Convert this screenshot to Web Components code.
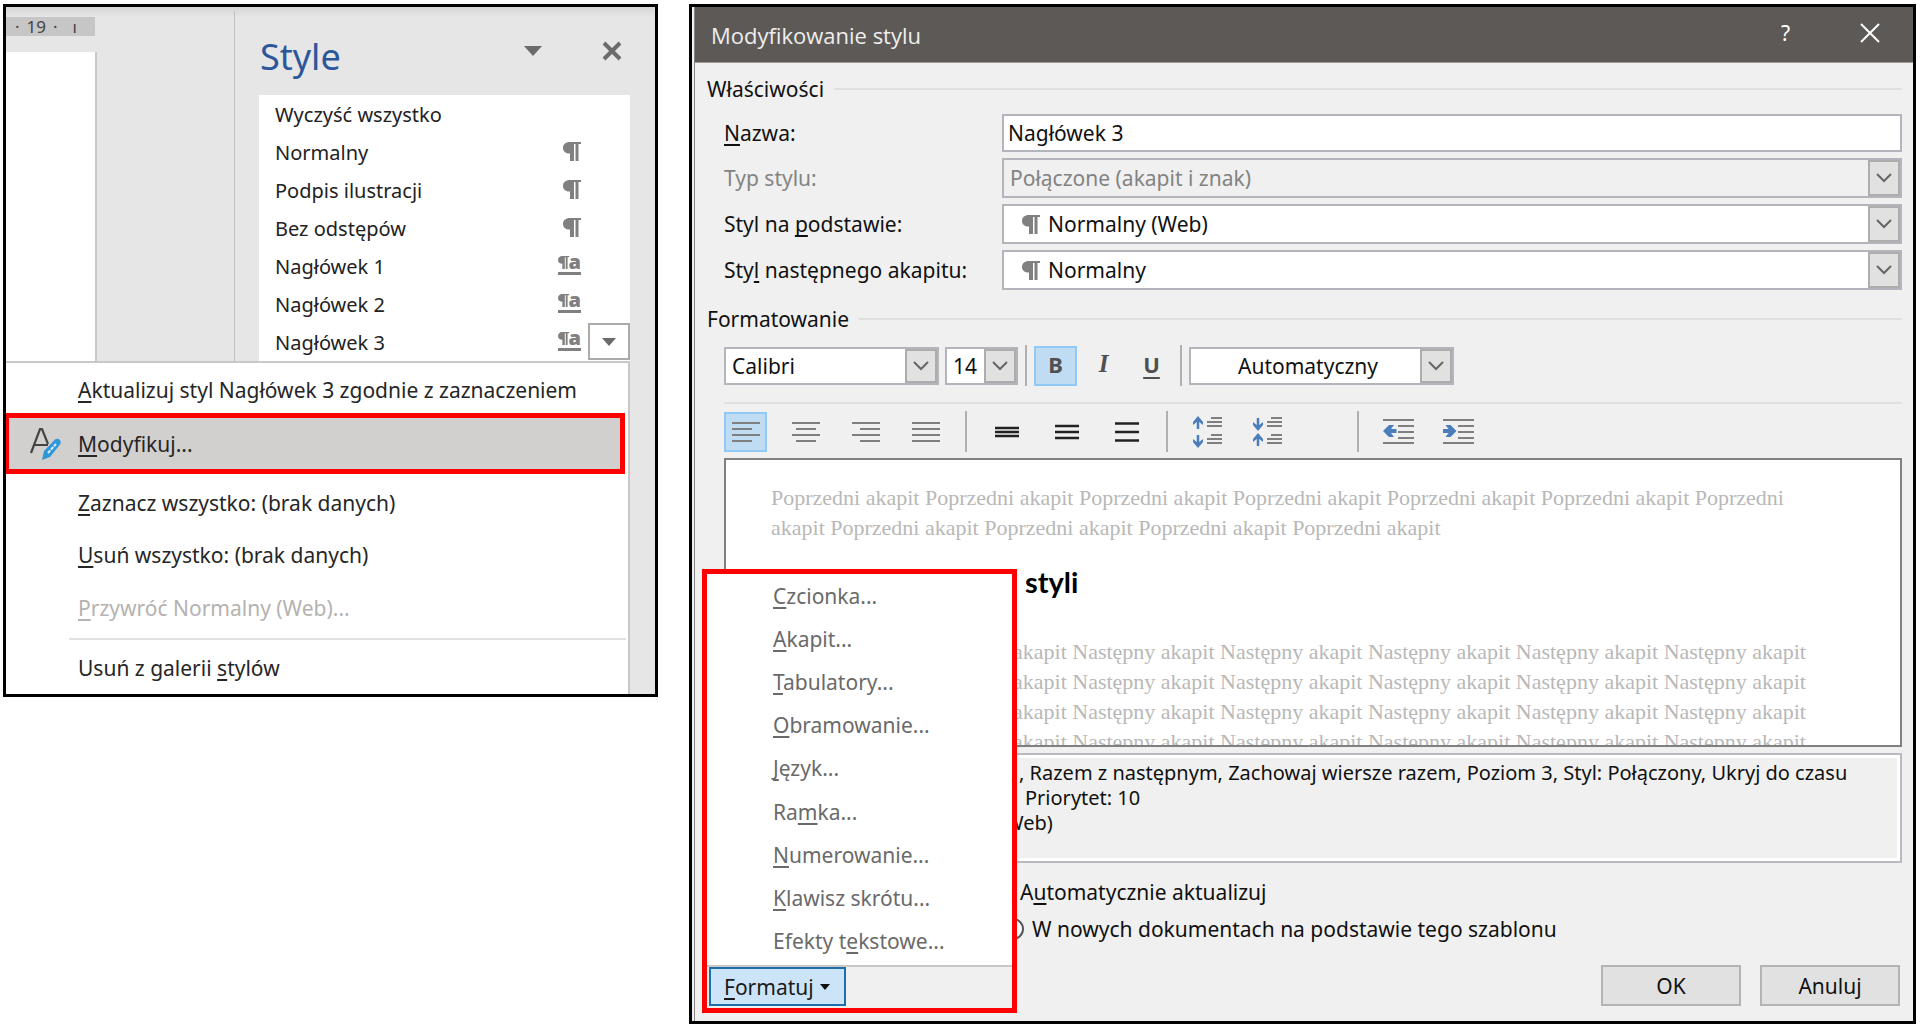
<!DOCTYPE html>
<html lang="pl">
<head>
<meta charset="utf-8">
<title>Modyfikowanie stylu</title>
<style>
body { margin: 0; background: #fff; font-family: "Noto Sans", "Open Sans", sans-serif; font-size: 21px; color: #1a1a1a; }
</style>
</head>
<body>
<app-board>
  <styles-window></styles-window>
  <modify-dialog></modify-dialog>
</app-board>

<script>
const BASE = `
  *, *::before, *::after { box-sizing: border-box; }
  button, input, select { font: inherit; color: inherit; margin: 0; padding: 0; border: 0; background: none; border-radius: 0; }
  svg { display: block; flex: none; overflow: visible; }
  u { text-decoration-thickness: 2px; text-underline-offset: 3px; text-decoration-skip-ink: none; }
`;

function define(name, html, setup) {
  customElements.define(name, class extends HTMLElement {
    connectedCallback() {
      if (this.shadowRoot) return;
      const root = this.attachShadow({ mode: 'open' });
      root.innerHTML = `<style>${BASE}</style>` + (typeof html === 'function' ? html(this) : html);
      if (setup) setup(this, root);
    }
  });
}

const PILCROW = `<path d="M7 0C2.5 0 0 2.5 0 6s2.5 5.500 7 5.500V19h4V0z M11 0h7v2h-7z M12.500 0h3v19h-3z"/>`;

const ICONS = {
  para: [18, 20, `<g fill="#808080">${PILCROW}</g>`],
  linked: [23, 20, `<g fill="#808080"><g transform="scale(.62 .68)">${PILCROW}</g><rect y="16" width="23" height="3"/></g>`],
  tri: [18, 10, `<path d="M0 0h18L9 10z" fill="#6b6b6b"/>`],
  triSmall: [14, 8, `<path d="M0 0h14L7 8z" fill="#6b6b6b"/>`],
  triBlack: [10, 6, `<path d="M0 0h10L5 6z" fill="#111"/>`],
  close: [20, 18, `<path d="M2 1l16 16M18 1L2 17" stroke="#6b6b6b" stroke-width="4" fill="none"/>`],
  closeThin: [20, 20, `<path d="M1 1l18 18M19 1L1 19" stroke="#fff" stroke-width="2" fill="none"/>`],
  chevron: [16, 10, `<path d="M1 1l7 7 7-7" stroke="#666" stroke-width="2" fill="none"/>`],
  modify: [32, 32, `<path d="M1 25L10 1h2l6 15M5 17h13" stroke="#444" stroke-width="2.200" fill="none"/><path d="M12 32l2-9L25 11.500c3-2.500 7.500 1 5 5L20 29z" fill="#2f97d8"/><path d="M18 25l8-9" stroke="#d8ecf8" stroke-width="2" stroke-dasharray="3.500 1"/>`],
  left: lines([[0, 28], [0, 20], [0, 28], [0, 20]]),
  center: lines([[0, 28], [4, 24], [0, 28], [4, 24]]),
  right: lines([[0, 28], [8, 28], [0, 28], [8, 28]]),
  justify: lines([[0, 28], [0, 28], [0, 28], [0, 28]]),
  sp1: spacing(4), sp2: spacing(6), sp3: spacing(8.5),
  spaceMore: [30, 32, arrow(5, 1, 14, 1) + arrow(5, 18, 31, 0) + rows()],
  spaceLess: [30, 32, arrow(5, 1, 14, 0) + arrow(5, 18, 31, 1) + rows()],
  outdent: [31, 26, indentLines() + `<path d="M0 12L6 6h5L8 10h5.500v4H8l3 4H6z" fill="#4a7ebb"/>`],
  indent: [31, 26, indentLines() + `<path d="M13.500 12l-6-6h-5l3 4H0v4h5.500l-3 4h5z" fill="#4a7ebb"/>`]
};
function lines(list) {
  return [28, 20, list.map(([a, b], i) => `<path d="M${a} ${1 + i * 6}H${b}" stroke="#7f7f7f" stroke-width="2"/>`).join('')];
}
function spacing(d) {
  return [24, 22, [-d, 0, d].map(y => `<path d="M0 ${11 + y}H24" stroke="#222" stroke-width="2.500"/>`).join('')];
}
function arrow(x, top, bottom, up) {
  const [tip, w, cut] = up ? [top - 1, top + 5, top + 8] : [bottom + 1, bottom - 5, bottom - 8];
  return `<path d="M${x} ${top + 1}V${bottom - 1}" stroke="#4a7ebb" stroke-width="2.500"/><path d="M${x - 5} ${w}L${x} ${tip}L${x + 5} ${w}V${cut}L${x} ${up ? tip + 5 : tip - 5}L${x - 5} ${cut}z" fill="#4a7ebb"/>`;
}
function rows() {
  return [[18, 2], [14, 6], [14, 10], [18, 19], [14, 23], [14, 27]].map(([x, y]) => `<path d="M${x} ${y}H29" stroke="#7f7f7f" stroke-width="2"/>`).join('');
}
function indentLines() {
  return [[0, 1], [15, 7], [15, 13], [15, 19], [0, 24]].map(([x, y]) => `<path d="M${x} ${y}H31" stroke="#7f7f7f" stroke-width="2"/>`).join('');
}
function icon(name) {
  const [w, h, body] = ICONS[name];
  return `<svg width="${w}" height="${h}" viewBox="0 0 ${w} ${h}" aria-hidden="true">${body}</svg>`;
}

define('app-board', `
  <style>
    :host { display: grid; grid-template-columns: 655fr 1227fr; gap: 31px; align-items: start; padding: 4px 4px 4px 3px; }
  </style><slot></slot>`);

/* ---------- Styles pane ---------- */

define('style-item', el => `
  <style>
    :host { display: flex; height: 38px; }
    .name { flex: 1; display: flex; justify-content: space-between; align-items: center; font-size: 20px; text-align: left; padding: 0 7px 0 16px; color: #222; }
    .drop, .pad { flex: none; width: 42px; }
    .drop { background: #fff; border: 2px solid #ababab; display: grid; place-items: center; margin-bottom: 1px; }
    .mark { display: grid; justify-items: end; align-items: start; font-weight: 700; line-height: 19px; color: #808080; }
    .mark > * { grid-area: 1 / 1; }
    .mark b { line-height: 12px; }
  </style>
  <button class="name"><slot></slot>${el.hasAttribute('icon') ? `<span class="mark">${icon(el.getAttribute('icon'))}${el.getAttribute('icon') === 'linked' ? '<b>a</b>' : ''}</span>` : ''}</button>
  ${el.hasAttribute('open') ? `<button class="drop" aria-label="Opcje stylu">${icon('triSmall')}</button>` : '<span class="pad"></span>'}`);

define('context-item', el => `
  <style>
    :host { display: block; height: 52px; }
    :host([first]) { height: 50px; padding-top: 4px; }
    :host([active]) { height: 61px; margin: 0 3px 3px 0; }
    :host([disabled]) { height: 54px; }
    button { width: 100%; height: 100%; display: flex; align-items: center; text-align: left; color: #262626; }
    .icon { width: 72px; flex: none; padding-left: 24px; }
    button:disabled { color: #b5b2b0; }
    :host([active]) button { background: #d2d0ce; border: 5px solid #f00; border-left-width: 3px; }
    :host([active]) .icon { width: 69px; padding-left: 21px; }
  </style>
  <button ${el.hasAttribute('disabled') ? 'disabled' : ''}><span class="icon">${el.hasAttribute('icon') ? icon(el.getAttribute('icon')) : ''}</span><span><slot></slot></span></button>`);

define('styles-window', `
  <style>
    :host { display: block; border: 3px solid #000; background: linear-gradient(#d6d6d6, #e6e6e6 10px); }
    .top { display: flex; }
    .doc { flex: none; width: 228px; display: flex; flex-direction: column; }
    .ruler { width: 89px; height: 19px; margin-top: 10px; background: #c6c6c6; font-size: 17px; line-height: 19px; color: #444; display: flex; gap: 7px; padding-left: 9px; }
    .ruler span:last-child { margin-left: 8px; }
    .page { width: 91px; flex: 1; margin-top: 16px; background: #fff; border-right: 2px solid #c8c8c8; }
    .pane { flex: 1; margin-top: 4px; border-left: 1px solid #c0c0c0; padding: 0 25px 0 24px; }
    header { display: flex; align-items: center; height: 84px; padding: 7px 8px 0 1px; }
    h1 { flex: 1; margin: 0; font-size: 36px; font-weight: 400; line-height: 48px; color: #2b579a; }
    header button { padding: 0 0 12px; }
    header button + button { margin-left: 60px; }
    .list { background: #fff; }
    .bottom { display: flex; }
    .menu { flex: 1; background: #fff; border-top: 2px solid #c8c8c8; border-right: 2px solid #c8c8c8; }
    hr { height: 2px; border: 0; margin: 3px 2px 2px 63px; background: #e1e1e1; }
    .edge { width: 25px; }
  </style>
  <div class="top">
    <div class="doc">
      <div class="ruler"><span>·</span><span>19</span><span>·</span><span>ı</span></div>
      <div class="page"></div>
    </div>
    <section class="pane">
      <header>
        <h1>Style</h1>
        <button aria-label="Opcje okienka">${icon('tri')}</button>
        <button aria-label="Zamknij">${icon('close')}</button>
      </header>
      <div class="list">
        <style-item>Wyczyść wszystko</style-item>
        <style-item icon="para">Normalny</style-item>
        <style-item icon="para">Podpis ilustracji</style-item>
        <style-item icon="para">Bez odstępów</style-item>
        <style-item icon="linked">Nagłówek 1</style-item>
        <style-item icon="linked">Nagłówek 2</style-item>
        <style-item icon="linked" open>Nagłówek 3</style-item>
      </div>
    </section>
  </div>
  <div class="bottom">
    <div class="menu">
      <context-item first><u>A</u>ktualizuj styl Nagłówek 3 zgodnie z zaznaczeniem</context-item>
      <context-item active icon="modify"><u>M</u>odyfikuj...</context-item>
      <context-item><u>Z</u>aznacz wszystko: (brak danych)</context-item>
      <context-item><u>U</u>suń wszystko: (brak danych)</context-item>
      <context-item disabled><u>P</u>rzywróć Normalny (Web)...</context-item>
      <hr>
      <context-item>Usuń z galerii <u>s</u>tylów</context-item>
    </div>
    <div class="edge"></div>
  </div>`);

/* ---------- Dialog ---------- */

const COMBO = `
  .combo { display: flex; background: #fff; border: 2px solid #b4b4bc; min-width: 0; }
  .combo select { appearance: none; flex: 1; min-width: 0; width: 100%; outline: 0; opacity: 1; }
  .combo .arrow { flex: none; width: 32px; background: #e1e1e1; border: 2px solid #adadad; display: grid; place-items: center; pointer-events: none; }
  .combo.off { background: #f0f0f0; }
`;

define('form-row', el => {
  const value = el.getAttribute('value');
  const off = el.hasAttribute('disabled');
  const ctl = el.hasAttribute('text')
    ? `<input id="c" type="text" value="${value}">`
    : `<div class="combo ${off ? 'off' : ''}">${el.hasAttribute('icon') ? icon(el.getAttribute('icon')) : ''}<select id="c" ${off ? 'disabled' : ''}><option>${value}</option></select><span class="arrow">${icon('chevron')}</span></div>`;
  return `
  <style>${COMBO}
    :host { display: grid; grid-template-columns: 278px 1fr; height: 40px; }
    :host([text]) { height: 38px; }
    label { align-self: center; line-height: 28px; }
    :host([disabled]) { color: #838383; }
    input { border: 2px solid #b4b4bc; background: #fff; padding: 0 4px; width: 100%; min-width: 0; }
    select { padding: 0 6px; }
    select:disabled { color: #838383; opacity: 1; }
    .combo > svg { margin: 9px 2px 0 18px; }
  </style>
  <label for="c"><slot></slot></label>${ctl}`;
});

define('tool-combo', el => `
  <style>${COMBO}
    :host { display: block; }
    .combo { height: 38px; }
    select { padding: 0 6px; }
    :host([center]) select { padding-left: 47px; }
  </style>
  <div class="combo"><select aria-label="${el.getAttribute('label')}"><option>${el.getAttribute('value')}</option></select><span class="arrow">${icon('chevron')}</span></div>`);

define('tool-button', el => `
  <style>
    :host { display: block; flex: none; width: 43px; height: 40px; }
    button { width: 100%; height: 100%; display: grid; place-items: center; font-size: 22px; color: #505050; line-height: 28px; }
    :host([glyph]) button { padding-bottom: 3px; }
    :host([on]) button { background: #c0dcf3; border: 2px solid #90c8f6; }
    ::slotted(i) { font-family: "Liberation Serif", serif; font-size: 25px; font-weight: 700; }
  </style>
  <button aria-label="${el.getAttribute('label')}" aria-pressed="${el.hasAttribute('on')}">${el.hasAttribute('icon') ? icon(el.getAttribute('icon')) : '<slot></slot>'}</button>`);

define('group-title', `
  <style>
    :host { display: flex; align-items: center; gap: 10px; line-height: 28px; }
    span { flex: 1; height: 2px; background: #dfdfdf; }
  </style><slot></slot><span></span>`);

define('format-menu', `
  <style>
    :host { display: flex; flex-direction: column; width: 315px; height: 444px; border: 5px solid #f00; background: #f0f0f0; }
    .items { flex: 1; display: flex; flex-direction: column; background: #fff; border-bottom: 2px solid #c8c8c8; padding-bottom: 2px; }
    .items button { flex: 1; text-align: left; padding-left: 66px; color: #6a6a6a; }
    .open { align-self: start; display: flex; align-items: center; gap: 6px; height: 39px; width: 137px; margin: 0 0 2px 2px; padding-left: 13px; background: #cce4f7; border: 2px solid #1c6fab; }
  </style>
  <div class="items">
    <button><u>C</u>zcionka...</button>
    <button><u>A</u>kapit...</button>
    <button><u>T</u>abulatory...</button>
    <button><u>O</u>bramowanie...</button>
    <button><u>J</u>ęzyk...</button>
    <button>Ra<u>m</u>ka...</button>
    <button><u>N</u>umerowanie...</button>
    <button><u>K</u>lawisz skrótu...</button>
    <button>Efekty t<u>e</u>kstowe...</button>
  </div>
  <button class="open"><span><u>F</u>ormatuj</span>${icon('triBlack')}</button>`);

const prev = Array(11).fill('Poprzedni akapit').join(' ');
const next = 'akapit' + ' Następny akapit'.repeat(5);

define('style-preview', `
  <style>
    :host { display: block; height: 289px; overflow: hidden; background: #fff; border: 2px solid #808080; padding: 23px 70px 0 45px; }
    p { margin: 0; font: 22px/30px "Liberation Serif", serif; color: #b8b8b8; }
    .next { padding-left: 242px; white-space: nowrap; }
    h2 { margin: 22px 0 38px; padding-left: 254px; font: 700 29px/34px Lato, sans-serif; color: #000; }
  </style>
  <p>${prev}</p><h2>styli</h2>${`<p class="next">${next}</p>`.repeat(4)}`);

define('modify-dialog', `
  <style>
    :host { display: block; position: relative; border: 3px solid #000; background: #f0f0f0; }
    .frame { margin-left: 2px; border-left: 1px solid #8a8685; }
    .bar { display: flex; align-items: center; height: 56px; background: #5d5956; border-bottom: 1px solid #a09d9b; color: #fff; padding: 0 33px 0 16px; }
    h1 { flex: 1; margin: 0; font: 400 22px/30px "Open Sans", sans-serif; color: #eee; }
    .bar button { margin-bottom: 3px; }
    .bar button + button { margin-left: 70px; }
    .body { padding: 12px 11px 15px 12px; color: #111; }
    .inset { padding-left: 17px; }
    .rows { display: grid; gap: 6px; margin: 11px 0 15px; }
    .tools { display: flex; align-items: center; height: 41px; }
    .font { gap: 7px; margin: 12px 0 16px; }
    .pair { display: flex; gap: 6px; }
    .biu { display: flex; gap: 5px; }
    .para { gap: 18px; margin: 7px 0 6px; }
    .group { display: flex; gap: 17px; }
    .sep { flex: none; width: 2px; height: 41px; background: #b0b0b0; }
    .push { margin-left: 50px; }
    hr { height: 2px; margin: 0; border: 0; background: #e0e0e0; }
    .desc { height: 110px; margin-top: 6px; border: 2px solid #b9b9c1; outline: 3px solid #fff; outline-offset: -5px; padding: 5px 3px 0; font-size: 20px; line-height: 25px; white-space: nowrap; }
    .desc div { padding-left: 290px; }
    .desc div + div { padding-left: 296px; }
    .desc div + div + div { padding-left: 276px; }
    .opt { display: flex; align-items: center; gap: 8px; line-height: 28px; margin: 15px 0 9px; padding-left: 266px; }
    .opt + .opt { margin: 0; padding-left: 278px; }
    .opt input { width: 22px; height: 22px; appearance: none; border: 2px solid #555; background: #fff; }
    .opt input[type=radio] { border-radius: 50%; }
    footer { display: flex; justify-content: flex-end; gap: 19px; margin-top: 22px; padding-right: 2px; }
    footer button { width: 140px; height: 41px; background: #e1e1e1; border: 2px solid #b4b4b4; }
    format-menu { position: absolute; left: 10px; bottom: 8px; }
  </style>
  <div class="frame">
    <div class="bar"><h1>Modyfikowanie stylu</h1><button aria-label="Pomoc">?</button><button aria-label="Zamknij">${icon('closeThin')}</button></div>
    <div class="body">
      <group-title>Właściwości</group-title>
      <div class="rows inset">
        <form-row text value="Nagłówek 3"><u>N</u>azwa:</form-row>
        <form-row disabled value="Połączone (akapit i znak)">Typ stylu:</form-row>
        <form-row icon="para" value="Normalny (Web)">Styl na <u>p</u>odstawie:</form-row>
        <form-row icon="para" value="Normalny">Sty<u>l</u> następnego akapitu:</form-row>
      </div>
      <group-title>Formatowanie</group-title>
      <div class="inset">
        <div class="tools font">
          <div class="pair">
            <tool-combo label="Czcionka" value="Calibri" style="width:215px"></tool-combo>
            <tool-combo label="Rozmiar" value="14" style="width:73px"></tool-combo>
          </div>
          <span class="sep"></span>
          <div class="biu">
            <tool-button glyph on label="Pogrubienie"><b>B</b></tool-button>
            <tool-button glyph label="Kursywa"><i>I</i></tool-button>
            <tool-button glyph label="Podkreślenie"><b style="text-decoration:underline;text-decoration-thickness:2px;text-underline-offset:4px">U</b></tool-button>
          </div>
          <span class="sep"></span>
          <tool-combo center label="Kolor" value="Automatyczny" style="width:265px"></tool-combo>
        </div>
        <hr>
        <div class="tools para">
          <div class="group">
            <tool-button on icon="left" label="Do lewej"></tool-button>
            <tool-button icon="center" label="Wyśrodkuj"></tool-button>
            <tool-button icon="right" label="Do prawej"></tool-button>
            <tool-button icon="justify" label="Wyjustuj"></tool-button>
          </div>
          <span class="sep"></span>
          <div class="group">
            <tool-button icon="sp1" label="Odstęp 1"></tool-button>
            <tool-button icon="sp2" label="Odstęp 1,5"></tool-button>
            <tool-button icon="sp3" label="Odstęp 2"></tool-button>
          </div>
          <span class="sep"></span>
          <div class="group">
            <tool-button icon="spaceMore" label="Zwiększ odstęp"></tool-button>
            <tool-button icon="spaceLess" label="Zmniejsz odstęp"></tool-button>
          </div>
          <span class="sep push"></span>
          <div class="group">
            <tool-button icon="outdent" label="Zmniejsz wcięcie"></tool-button>
            <tool-button icon="indent" label="Zwiększ wcięcie"></tool-button>
          </div>
        </div>
        <style-preview></style-preview>
        <div class="desc">
          <div>, Razem z następnym, Zachowaj wiersze razem, Poziom 3, Styl: Połączony, Ukryj do czasu</div>
          <div>Priorytet: 10</div>
          <div>Web)</div>
        </div>
        <label class="opt"><input type="checkbox"><span>A<u>u</u>tomatycznie aktualizuj</span></label>
        <label class="opt"><input type="radio" name="scope"><span>W nowych dokumentach na podstawie tego szablonu</span></label>
      </div>
      <footer><button>OK</button><button>Anuluj</button></footer>
    </div>
  </div>
  <format-menu></format-menu>`);
</script>
</body>
</html>
